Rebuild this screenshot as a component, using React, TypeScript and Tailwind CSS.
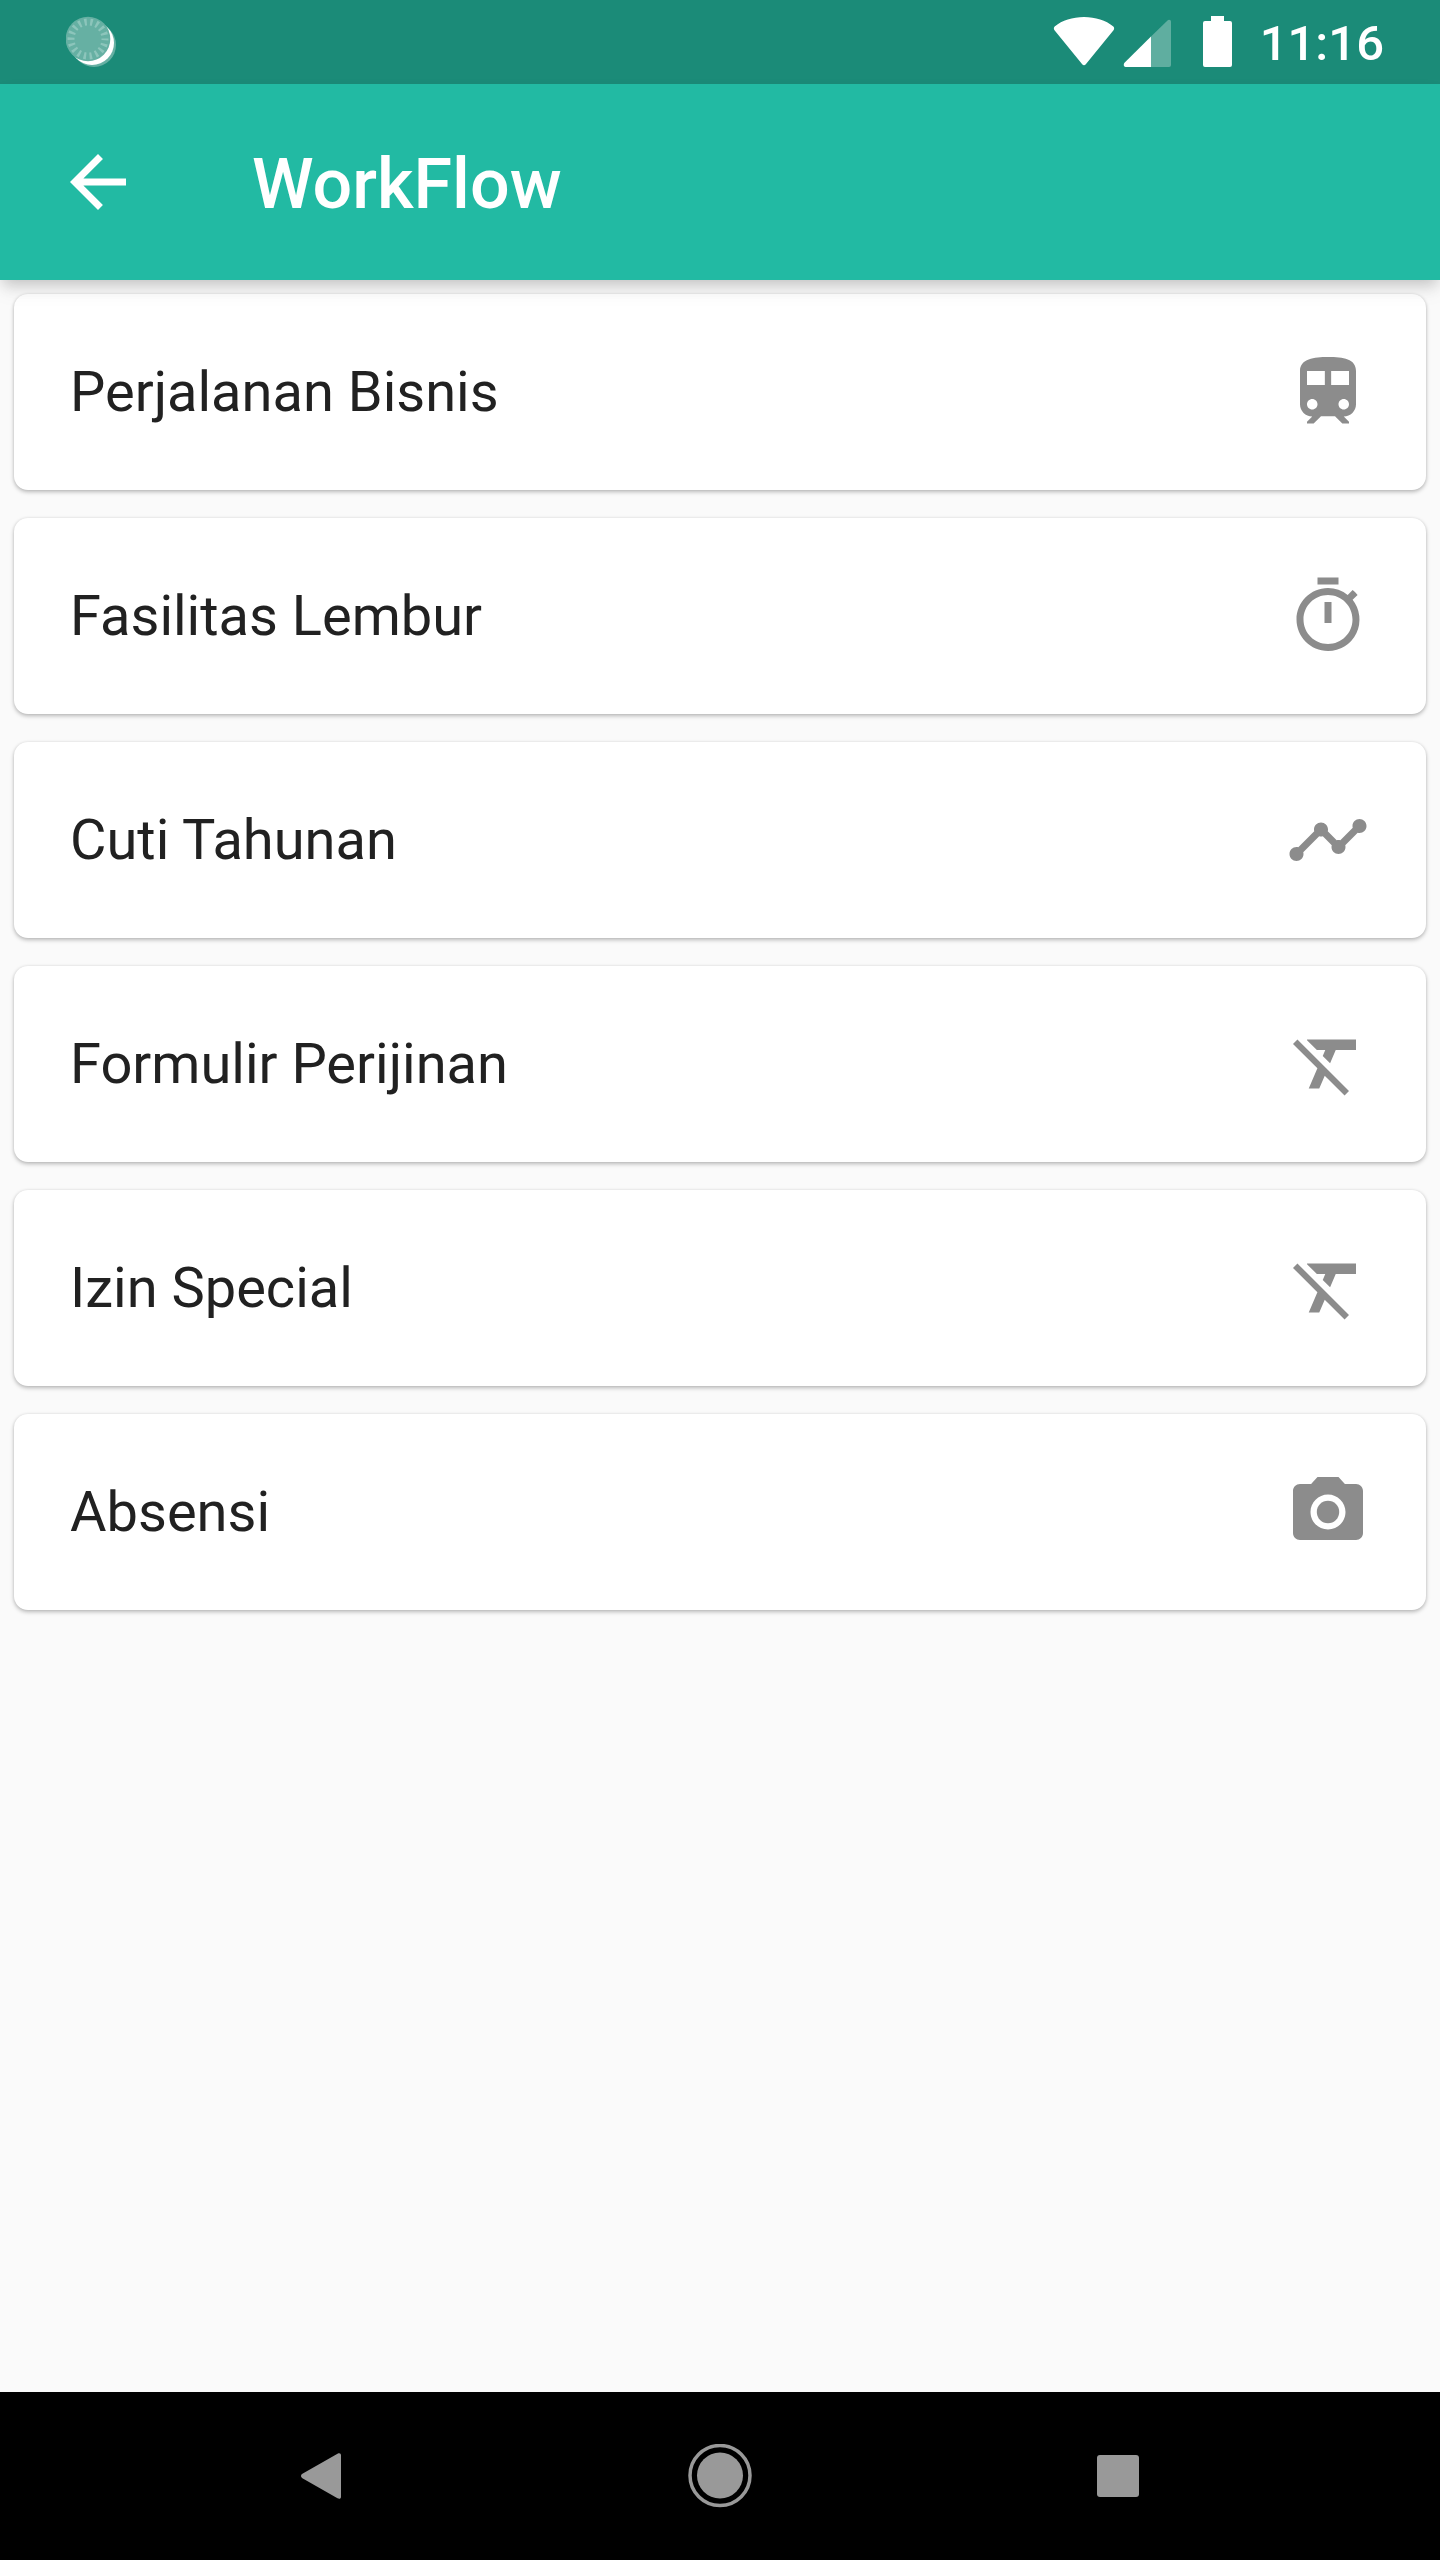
import type { IconType } from "react-icons";
import {
  MdArrowBack,
  MdFormatClear,
  MdOutlineTimer,
  MdPhotoCamera,
  MdTimeline,
} from "react-icons/md";

type IconProps = { className?: string };

function TrainIcon({ className }: IconProps) {
  return (
    <svg viewBox="0 0 24 24" fill="currentColor" className={className}>
      <path d="M12 2c-4 0-8 .5-8 4v9.5C4 17.43 5.57 19 7.5 19L6 20.5v.5h1.9l2.1-2.1h4l2.1 2.1H18v-.5L16.5 19c1.93 0 3.5-1.57 3.5-3.5V6c0-3.5-3.58-4-8-4zM7.5 17c-.83 0-1.5-.67-1.5-1.5S6.67 14 7.5 14s1.5.67 1.5 1.5S8.33 17 7.5 17zm3.6-7H6V6h5.1v4zm1.8 0V6H18v4h-5.1zm3.6 7c-.83 0-1.5-.67-1.5-1.5s.67-1.5 1.5-1.5 1.5.67 1.5 1.5-.67 1.5-1.5 1.5z" />
    </svg>
  );
}

const menuItems: { label: string; icon: IconType | typeof TrainIcon }[] = [
  { label: "Perjalanan Bisnis", icon: TrainIcon },
  { label: "Fasilitas Lembur", icon: MdOutlineTimer },
  { label: "Cuti Tahunan", icon: MdTimeline },
  { label: "Formulir Perijinan", icon: MdFormatClear },
  { label: "Izin Special", icon: MdFormatClear },
  { label: "Absensi", icon: MdPhotoCamera },
];

function StatusBar() {
  return (
    <div className="flex h-[84px] shrink-0 items-start justify-between bg-[#1b8b78] pr-[56px] pl-[66px] text-white">
      <svg width="52" height="84" viewBox="66 0 52 84">
        <circle cx="94" cy="45" r="22" fill="#66b0a3" />
        <circle cx="92" cy="43" r="22" fill="#fff" />
        <circle cx="88" cy="39" r="22.3" fill="#66b0a3" />
        <circle
          cx="88"
          cy="39"
          r="17"
          fill="none"
          stroke="#8cc5bb"
          strokeWidth="7"
          strokeDasharray="2.4 3.534"
          strokeDashoffset="1.2"
        />
      </svg>
      <div className="flex items-start">
        <svg width="200" height="84" viewBox="1040 0 200 84" fill="currentColor">
          <path d="M1055 26.2C1062 20.5 1072.5 17 1084 17s22 3.5 29 9.200c1.300 1 1.500 2.600.5 4l-27.700 34c-1 1.300-2.600 1.300-3.600 0l-27.700-34c-1-1.400-.8-3 .5-4z" />
          <path
            opacity=".3"
            d="M1151 36.5l16.500-16c1.400-1.300 3.500-.6 3.500 1.200V65a2 2 0 0 1-2 2h-18z"
          />
          <path d="M1151 36.500V67h-25.500c-1.800 0-2.300-2.800-1-4.200z" />
          <path d="M1211 16h13v5h6a2 2 0 0 1 2 2v42a2 2 0 0 1-2 2h-25a2 2 0 0 1-2-2V23a2 2 0 0 1 2-2h6z" />
        </svg>
        <span className="ml-5 text-[49px] leading-[88px] font-medium">
          11:16
        </span>
      </div>
    </div>
  );
}

function AppBar() {
  return (
    <header className="z-10 flex h-[196px] shrink-0 items-center bg-[#22baa3] pl-14 text-white shadow-[0_7px_14px_-3px_rgba(0,0,0,0.2),0_14px_18px_rgba(0,0,0,0.04)]">
      <MdArrowBack className="size-[84px]" />
      <h1 className="ml-28 pt-1 text-[70px] leading-none font-medium">
        WorkFlow
      </h1>
    </header>
  );
}

function NavigationBar() {
  return (
    <nav className="flex h-[168px] shrink-0 items-center justify-between bg-black px-[301px] text-[#999]">
      <svg width="42" height="46" viewBox="0 0 42 46" fill="currentColor">
        <path d="M1.400 20.800L36.500.7C38.500-.3 40 .3 40 2.300v41.400c0 2-1.500 2.600-3.500 1.600L1.400 25.200c-1.900-1.100-1.900-3.300 0-4.400z" />
      </svg>
      <svg width="64" height="64" viewBox="0 0 64 64" fill="currentColor">
        <circle cx="32" cy="31.5" r="30" fill="none" stroke="currentColor" strokeWidth="3.500" />
        <circle cx="32" cy="31.5" r="23" />
      </svg>
      <span className="size-[42px] rounded-[3px] bg-current" />
    </nav>
  );
}

export default function App() {
  return (
    <div className="flex h-[2560px] w-[1440px] flex-col bg-[#fafafa] font-[Roboto,sans-serif]">
      <StatusBar />
      <AppBar />
      <main className="flex flex-1 flex-col gap-7 p-3.5">
        {menuItems.map(({ label, icon: Icon }) => (
          <div
            key={label}
            className="flex h-[196px] items-center justify-between rounded-[14px] bg-white px-14 shadow-[0_2px_4px_rgba(0,0,0,0.26),0_0_3px_rgba(0,0,0,0.08)]"
          >
            <span className="text-[56px] leading-none text-[#212121]">
              {label}
            </span>
            <Icon className="size-[84px] text-[#8c8c8c]" />
          </div>
        ))}
      </main>
      <NavigationBar />
    </div>
  );
}
